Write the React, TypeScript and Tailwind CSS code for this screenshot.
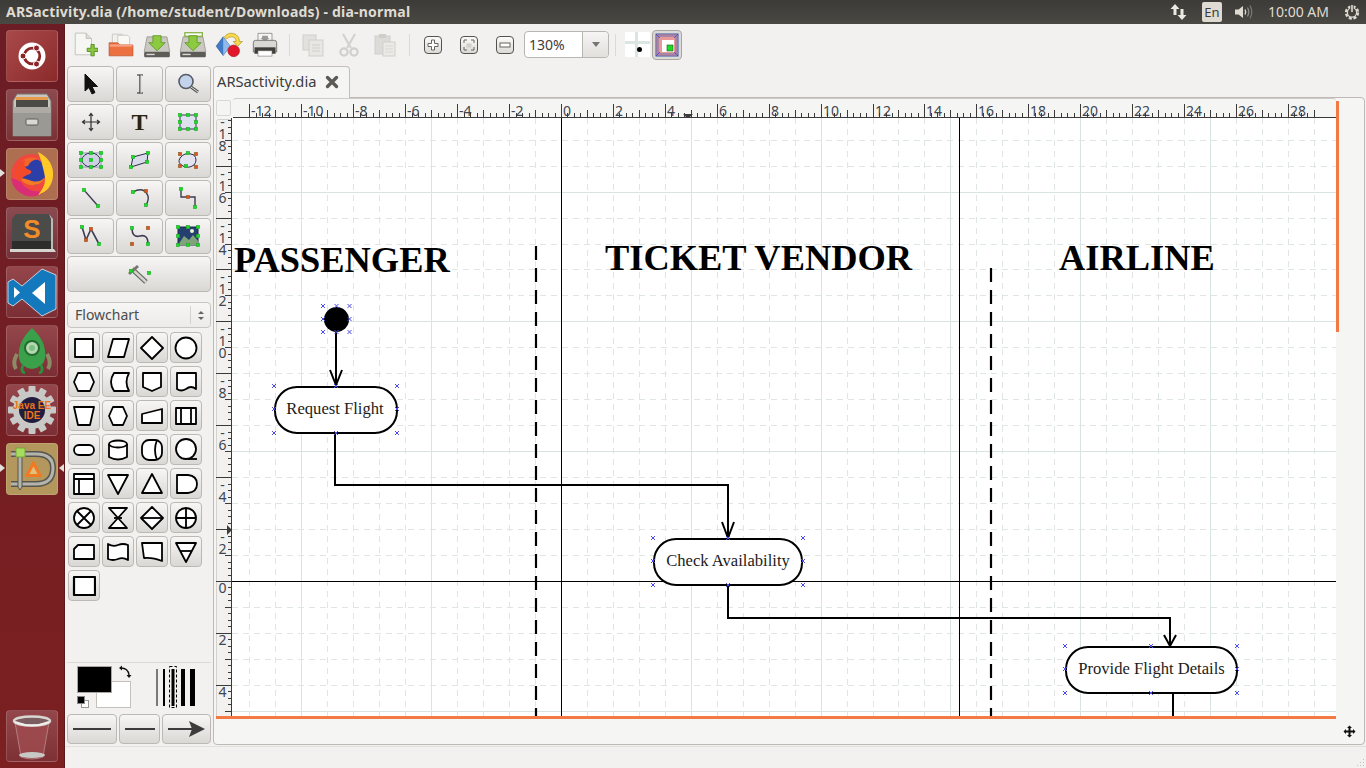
import React from "react";

const UNIT = 25.96;
const ORIGIN_X = 561;
const ORIGIN_Y = 581;

// small svg wrapper, 24 box
const Ic = ({ s = 24, children }: { s?: number; children: React.ReactNode }) => (
  <svg width={s} height={s} viewBox="0 0 24 24" className="block">
    {children}
  </svg>
);

// green/orange handle dots for the dia tool icons
const Dot = ({ x, y, o }: { x: number; y: number; o?: boolean }) => (
  <rect x={x - 1.8} y={y - 1.8} width="3.6" height="3.6" fill={o ? "#e8501c" : "#17e024"} stroke="#2f6a2f" strokeWidth="0.3" />
);

const Shadow = "#8f8fb8";

/* ---------- launcher icons ---------- */
const UbuntuLogo = () => (
  <svg width="52" height="52" viewBox="0 0 52 52">
    <circle cx="26" cy="26" r="13.5" fill="#fff" />
    <circle cx="26" cy="26" r="7.8" fill="none" stroke="#8a2426" strokeWidth="2.8" />
    <circle cx="17" cy="26" r="3" fill="#8a2426" stroke="#fff" />
    <circle cx="30.5" cy="18" r="3" fill="#8a2426" stroke="#fff" />
    <circle cx="30.5" cy="34" r="3" fill="#8a2426" stroke="#fff" />
  </svg>
);

const Cabinet = () => (
  <svg width="52" height="52" viewBox="0 0 52 52">
    <path d="M7 12 L11 5 H41 L45 12 V47 H7 Z" fill="#c9c6c0" stroke="#77736d" />
    <rect x="10" y="9" width="32" height="9" fill="#4c4a46" />
    <rect x="10" y="8" width="32" height="3" fill="#e79a4c" />
    <rect x="7" y="18" width="38" height="13" fill="#aeaba5" />
    <rect x="7" y="24" width="38" height="23" fill="#9b9993" />
    <rect x="20" y="30" width="12" height="6" rx="1" fill="#dad8d3" stroke="#5f5d58" />
  </svg>
);

const Firefox = () => (
  <svg width="52" height="52" viewBox="0 0 52 52">
    <circle cx="26" cy="27" r="21" fill="#f0483e" />
    <path d="M5 30 A21 21 0 0 0 40 43 Q22 46 14 33 Z" fill="#d92e76" />
    <circle cx="27" cy="24" r="13" fill="#2c3ea8" />
    <path d="M15 14 Q22 7 33 11 Q24 12 22 18 Q14 20 15 14 Z" fill="#f2662b" />
    <path d="M32 4 Q48 12 47 28 Q46 42 32 47 Q42 36 38 24 Q36 14 32 4 Z" fill="#ffc928" />
    <path d="M14 30 Q20 40 33 36 Q38 33 39 29 Q34 35 26 33 Q18 30 14 30 Z" fill="#f47a24" />
    <path d="M10 22 Q12 14 19 12 Q17 18 21 21 Q28 23 24 26 Q16 28 14 34 Q9 30 10 22 Z" fill="#f24a2b" />
  </svg>
);

const Sublime = () => (
  <svg width="52" height="52" viewBox="0 0 52 52">
    <path d="M10 7 H43 L46 12 V42 H6 V12 Z" fill="#4b4b49" />
    <path d="M6 34 H46 V42 H6 Z" fill="#2d2d2b" />
    <path d="M4 42 H48 L50 45 H4 Z" fill="#d6d5d0" />
    <path d="M43 7 L47 12 V42 L45 42 V12 Z" fill="#bdbbb5" />
    <text x="26" y="31" textAnchor="middle" fontSize="26" fontWeight="700" fontFamily='"Liberation Sans", sans-serif' fill="#f28c28">S</text>
  </svg>
);

const VSCode = () => (
  <svg width="52" height="52" viewBox="0 0 52 52">
    <path d="M36 3 L50 9 V43 L36 50 L16 33 L7 40 L2 37 V16 L7 13 L16 20 Z" fill="#1478bd" stroke="#e8eef2" strokeWidth="0.8" />
    <path d="M8 21 V32 L14 26.5 Z" fill="#fff" />
    <path d="M39 16 V38 L26 27 Z" fill="#fff" />
  </svg>
);

const Rocket = () => (
  <svg width="52" height="52" viewBox="0 0 52 52">
    <path d="M11 29 Q6 38 10 44 M41 29 Q46 38 42 44" fill="none" stroke="#8d8a66" strokeWidth="4" />
    <path d="M26 3 Q41 17 39 33 Q38 42 26 44 Q14 42 13 33 Q11 17 26 3 Z" fill="#3aa04a" />
    <circle cx="26" cy="23" r="7" fill="#b6d8b0" stroke="#226b30" strokeWidth="2" />
    <circle cx="26" cy="23" r="3" fill="#7fbf85" />
    <path d="M17 40 Q14 47 19 48 M35 40 Q38 47 33 48" fill="none" stroke="#2b8f3c" strokeWidth="3" />
  </svg>
);

const JavaEE = () => (
  <svg width="52" height="52" viewBox="0 0 52 52">
    <g fill="#c8c8c6">
      {Array.from({ length: 6 }).map((_, i) => (
        <rect key={i} x="22.5" y="2" width="7" height="48" rx="1" transform={`rotate(${i * 30} 26 26)`} />
      ))}
    </g>
    <circle cx="26" cy="26" r="19" fill="#c8c8c6" />
    <circle cx="26" cy="26" r="13" fill="#221c3e" />
    <text textAnchor="middle" fontSize="10" fontWeight="700" fontFamily='"Liberation Sans", sans-serif' fill="#e8751a">
      <tspan x="26" y="25">Java EE</tspan>
      <tspan x="26" y="35">IDE</tspan>
    </text>
  </svg>
);

const DiaIcon = () => (
  <svg width="52" height="52" viewBox="0 0 52 52">
    <path d="M5 11 H30 Q47 11 47 25 Q47 41 30 41 H5" fill="none" stroke="#55564f" strokeWidth="6" />
    <path d="M5 11 H30 Q47 11 47 25 Q47 41 30 41 H5" fill="none" stroke="#b4b4ac" strokeWidth="3" />
    <path d="M12 8 V44 L14 47 L16 44 V8 Z" fill="#b4b4ac" stroke="#55564f" />
    <rect x="10" y="5" width="9" height="9" fill="#a6dd5e" stroke="#7aa33c" />
    <path d="M21 32.5 L27.5 20 L34 32.5 Z" fill="#e2bf7c" stroke="#f07a22" strokeWidth="3" />
  </svg>
);

const Trash = () => (
  <svg width="52" height="52" viewBox="0 0 52 52">
    <path d="M9 12 L15 47 Q26 51 37 47 L43 12 Z" fill="#a14d52" fillOpacity="0.75" stroke="#c9a5a5" strokeWidth="0.6" />
    <ellipse cx="26" cy="11" rx="18" ry="4.5" fill="#7d5e60" stroke="#d9d7d2" strokeWidth="2.5" />
    <path d="M9 12 Q26 19 43 12" fill="none" stroke="#f0eeea" strokeWidth="2" />
    <ellipse cx="26" cy="45" rx="13" ry="3" fill="#c8c8c4" />
  </svg>
);

const Tile = ({ className, pip, right, children }: { className: string; pip?: boolean; right?: boolean; children: React.ReactNode }) => (
  <div className="relative flex h-[52px] w-[52px] items-center justify-center">
    <div className={`absolute inset-0 rounded-[4px] border border-white/15 ${className}`} />
    <div className="relative">{children}</div>
    {pip && <div className="absolute left-[-6px] top-[21px] h-0 w-0 border-y-[4px] border-l-[5px] border-y-transparent border-l-[#e3dfd9]" />}
    {right && <div className="absolute right-[-6px] top-[21px] h-0 w-0 border-y-[4px] border-r-[5px] border-y-transparent border-r-[#e3dfd9]" />}
  </div>
);

const Launcher = () => (
  <div className="flex w-[65px] shrink-0 flex-col items-start gap-[7px] border-r border-[#5a1a1c] bg-gradient-to-b from-[#6b1c24] to-[#7c2021] pl-[6px] pt-[6px]">
    <Tile className="bg-gradient-to-br from-[#a8494a] to-[#8c2a2b]"><UbuntuLogo /></Tile>
    <Tile className="bg-gradient-to-b from-[#8d4a4e] to-[#7a3236]"><Cabinet /></Tile>
    <Tile className="bg-[#ad6f50]" pip><Firefox /></Tile>
    <Tile className="bg-gradient-to-b from-[#8a4a50] to-[#73333a]"><Sublime /></Tile>
    <Tile className="bg-gradient-to-b from-[#94464b] to-[#7b2f35]"><VSCode /></Tile>
    <Tile className="bg-gradient-to-b from-[#94464b] to-[#7b2f35]"><Rocket /></Tile>
    <Tile className="bg-gradient-to-b from-[#94464b] to-[#7b2f35]"><JavaEE /></Tile>
    <Tile className="bg-[#b3975c]" pip right><DiaIcon /></Tile>
    <div className="mt-auto mb-[6px]">
      <Tile className="bg-gradient-to-b from-[#93474a] to-[#7d3135]"><Trash /></Tile>
    </div>
  </div>
);

/* ---------- top bar ---------- */
const TopBar = () => (
  <div className="flex h-6 shrink-0 items-center bg-gradient-to-b from-[#3c3b37] to-[#4a4843] pl-[6px] pr-[5px] font-['Noto_Sans',sans-serif] text-[#dfdbd2]">
    <span className="text-[14px] font-bold leading-none tracking-[0.2px]">ARSactivity.dia (/home/student/Downloads) - dia-normal</span>
    <div className="ml-auto flex items-center">
      <svg width="20" height="20" viewBox="0 0 20 20" className="mr-[13px]">
        <path d="M6 2 L1.5 7 H4.5 V13 H7.5 V7 H10.5 Z" fill="#ece9e2" />
        <path d="M13 18 L8.5 13 H11.5 V7 H14.5 V13 H17.5 Z" fill="#ece9e2" />
      </svg>
      <div className="mr-[12px] flex h-5 w-5 items-center justify-center rounded-[2px] bg-[#dfdbd2] text-[13px] leading-none text-[#3c3b37]">En</div>
      <svg width="20" height="18" viewBox="0 0 20 18" className="mr-[14px]">
        <path d="M1 6.5 H4.5 L9 3 V15 L4.5 11.5 H1 Z" fill="#dfdbd2" />
        <path d="M11 6.5 Q12.5 9 11 11.5" fill="none" stroke="#dfdbd2" strokeWidth="1.4" />
        <path d="M13.5 4.5 Q16 9 13.5 13.5" fill="none" stroke="#8c8a84" strokeWidth="1.3" />
        <path d="M16 2.5 Q19.5 9 16 15.5" fill="none" stroke="#77756f" strokeWidth="1.3" />
      </svg>
      <span className="mr-[14px] text-[14px] leading-none">10:00 AM</span>
      <svg width="18" height="18" viewBox="0 0 18 18">
        <circle cx="9" cy="9.5" r="6" fill="none" stroke="#dfdbd2" strokeWidth="2.4" strokeDasharray="3 1.7" />
        <circle cx="9" cy="9.5" r="4.6" fill="none" stroke="#dfdbd2" strokeWidth="1.2" />
        <path d="M9 2 V9" stroke="#46443f" strokeWidth="3.4" />
        <path d="M9 2 V9" stroke="#dfdbd2" strokeWidth="1.6" />
      </svg>
    </div>
  </div>
);

/* ---------- toolbar ---------- */
const NewIcon = () => (
  <Ic s={26}>
    <path d="M3 1 H13 L18 6 V21 H3 Z" fill="#f6f6f3" stroke="#b8b6b0" strokeWidth="0.7" />
    <path d="M13 1 V6 H18" fill="#dcdbd6" stroke="#b8b6b0" strokeWidth="0.7" />
    <path d="M14 15 H17.5 V11.5 H20.5 V15 H24 V18 H20.5 V22 H17.5 V18 H14 Z" fill="#8cc63f" stroke="#4c8a1c" strokeWidth="0.8" />
  </Ic>
);
const OpenIcon = () => (
  <Ic s={26}>
    <path d="M4 2 H13 L15 4 V12 H4 Z" fill="#f2f1ec" stroke="#b8b6b0" strokeWidth="0.6" />
    <path d="M9 3 H18 L20 5 V12 H9 Z" fill="#f9f8f5" stroke="#b8b6b0" strokeWidth="0.6" />
    <path d="M1 10 H9 L11 12 H23 V22 H1 Z" fill="#ed7040" stroke="#b8461d" strokeWidth="0.6" />
    <rect x="1.5" y="11.5" width="21" height="2" fill="#f7a384" />
  </Ic>
);
const DriveIcon = ({ label }: { label?: boolean }) => (
  <Ic s={28}>
    <path d="M3.5 5 H20.5 L23 18 H1 Z" fill="#c9c8c1" stroke="#8a8983" strokeWidth="0.6" />
    <rect x="1" y="18" width="22" height="4.5" rx="1" fill="#5d5c57" />
    <rect x="3" y="19.5" width="7" height="1.2" fill="#d9d8d2" />
    {label && <rect x="5" y="1.5" width="15" height="3" fill="#fff" stroke="#7bab34" strokeWidth="1" />}
    <path d="M8.5 4 H15.5 V10 H19 L12 17 L5 10 H8.5 Z" fill="#8ccb3f" stroke="#5d9420" strokeWidth="0.7" />
  </Ic>
);
const ExportIcon = () => (
  <Ic s={28}>
    <path d="M1 13 L7 5 L13 13 L7 21 Z" fill="#3f7bc6" stroke="#1c4e8f" strokeWidth="0.5" />
    <path d="M7 5 L13 13 L7 21 Z" fill="#8fb9e8" />
    <circle cx="16" cy="17" r="5" fill="#e2182a" stroke="#9c0f1b" strokeWidth="0.5" />
    <path d="M8 5 Q12 0 18 3 Q21 5 21 9 H23.5 L19.5 13 L15.5 9 H18 Q18 5 14 5 Q11 5 10 7 Z" fill="#f5d94e" stroke="#b6931c" strokeWidth="0.6" />
  </Ic>
);
const PrintIcon = () => (
  <Ic s={28}>
    <path d="M6 2 H18 V9 H6 Z" fill="#f6f6f4" stroke="#77766f" strokeWidth="0.6" />
    <path d="M9.5 4 H14.5 V6 H16 L12 9 L8 6 H9.5 Z" fill="#9a9995" />
    <path d="M2 10 Q2 8 4 8 H20 Q22 8 22 10 V18 H2 Z" fill="#d9d8d4" stroke="#66655f" strokeWidth="0.7" />
    <rect x="3" y="14" width="18" height="5.5" fill="#3f3e3a" />
    <rect x="6" y="17" width="12" height="4.5" fill="#fff" stroke="#77766f" strokeWidth="0.5" />
  </Ic>
);
const CopyIcon = () => (
  <Ic>
    <rect x="2" y="2" width="13" height="15" fill="#e2e1de" stroke="#d0cfcb" />
    <rect x="8" y="7" width="14" height="16" fill="#e8e7e4" stroke="#d0cfcb" />
    <path d="M11 12 H19 M11 15 H19 M11 18 H19" stroke="#d0cfcb" />
  </Ic>
);
const CutIcon = () => (
  <Ic>
    <path d="M6 1 L14 15 M18 1 L10 15" stroke="#d3d2ce" strokeWidth="2.2" />
    <circle cx="7" cy="19" r="3.6" fill="none" stroke="#d0cfcb" strokeWidth="2.2" />
    <circle cx="17" cy="19" r="3.6" fill="none" stroke="#d0cfcb" strokeWidth="2.2" />
  </Ic>
);
const PasteIcon = () => (
  <Ic>
    <rect x="2" y="3" width="15" height="18" fill="#dcdbd7" stroke="#d0cfcb" />
    <rect x="6" y="1" width="7" height="4" fill="#cfcec9" />
    <rect x="10" y="9" width="12" height="14" fill="#ebeae7" stroke="#d0cfcb" />
    <path d="M12 13 H20 M12 16 H20 M12 19 H20" stroke="#d8d7d3" />
  </Ic>
);

const SmallBtn = ({ children }: { children: React.ReactNode }) => (
  <div className="flex h-[18px] w-[18px] items-center justify-center rounded-[4px] border border-[#55534e] bg-gradient-to-b from-[#fbfbfa] to-[#dcdad6]">{children}</div>
);

const Sep = () => <div className="h-[22px] w-px bg-[#dcdad6]" />;

const Cell = ({ w = 36, children }: { w?: number; children: React.ReactNode }) => (
  <div className="flex items-center justify-center" style={{ width: w }}>{children}</div>
);

const Toolbar = () => (
  <div className="flex h-[38px] shrink-0 items-center pl-[2px] pt-[3px]">
    <Cell><NewIcon /></Cell>
    <Cell><OpenIcon /></Cell>
    <Cell><DriveIcon /></Cell>
    <Cell><DriveIcon label /></Cell>
    <Cell><ExportIcon /></Cell>
    <Cell><PrintIcon /></Cell>
    <Cell w={12}><Sep /></Cell>
    <Cell><CopyIcon /></Cell>
    <Cell><CutIcon /></Cell>
    <Cell><PasteIcon /></Cell>
    <Cell w={12}><Sep /></Cell>
    <Cell>
      <SmallBtn>
        <svg width="12" height="12" viewBox="0 0 12 12"><path d="M4.5 1 H7.5 V4.5 H11 V7.5 H7.5 V11 H4.5 V7.5 H1 V4.5 H4.5 Z" fill="#fff" stroke="#66645f" /></svg>
      </SmallBtn>
    </Cell>
    <Cell>
      <SmallBtn>
        <svg width="12" height="12" viewBox="0 0 12 12"><path d="M1 4 V1 H4 M8 1 H11 V4 M11 8 V11 H8 M4 11 H1 V8" fill="none" stroke="#66645f" /><rect x="3.5" y="4.5" width="5" height="4" fill="#d0cfcb" /></svg>
      </SmallBtn>
    </Cell>
    <Cell>
      <SmallBtn>
        <svg width="12" height="12" viewBox="0 0 12 12"><rect x="1" y="4" width="10" height="4" fill="#fff" stroke="#66645f" /></svg>
      </SmallBtn>
    </Cell>
    <div className="ml-[1px] flex h-[27px] w-[85px] items-center rounded-[4px] border border-[#b9b5b0] bg-white">
      <span className="w-[57px] pl-[4px] font-['Noto_Sans',sans-serif] text-[14px] leading-none text-[#3c3c3c]">130%</span>
      <div className="flex h-full flex-1 items-center justify-center rounded-r-[4px] border-l border-[#b9b5b0] bg-gradient-to-b from-[#f6f5f4] to-[#e2e0dd]">
        <div className="h-0 w-0 border-x-[4px] border-t-[5px] border-x-transparent border-t-[#77756f]" />
      </div>
    </div>
    <div className="ml-[6px] h-[22px] w-px bg-[#dcdad6]" />
    <div className="relative ml-[9px] h-[25px] w-[25px] bg-white">
      <div className="absolute left-[10px] top-0 h-full w-[3px] bg-[#dbe5e3]" />
      <div className="absolute left-0 top-[9px] h-[3px] w-full bg-[#dbe5e3]" />
      <div className="absolute left-[12px] top-[15px] h-[5px] w-[5px] rounded-full bg-black" />
    </div>
    <div className="ml-[2px] flex h-[30px] w-[30px] items-center justify-center rounded-[4px] border border-[#a9a6a1] bg-[#dbdad7]">
      <svg width="24" height="24" viewBox="0 0 24 24">
        <rect x="1" y="1" width="22" height="22" fill="#e89a9a" stroke="#3f58a8" strokeWidth="1" />
        <rect x="3" y="3" width="18" height="18" fill="none" stroke="#6e6ea8" />
        <rect x="7" y="7" width="12" height="12" fill="#fff" />
        <rect x="12" y="12" width="6" height="6" fill="#1fd92a" stroke="#1b5a1b" strokeWidth="0.6" />
        <path d="M1 1 L5 5 M23 1 L19 5 M1 23 L5 19 M23 23 L19 19" stroke="#3b3be0" strokeWidth="0.7" />
      </svg>
    </div>
  </div>
);

/* ---------- toolbox ---------- */
const ToolBtn = ({ className = "", children }: { className?: string; children: React.ReactNode }) => (
  <div className={`flex items-center justify-center rounded-[4px] border border-[#bcb9b4] bg-gradient-to-b from-[#f7f6f5] to-[#dad8d5] ${className}`}>{children}</div>
);

const tools: React.ReactNode[] = [
  <Ic key="a"><path d="M6 2 L6 19 L10 15.5 L13 22 L16 20.5 L13 14.5 L18.5 14.5 Z" fill="#111" stroke="#111" /></Ic>,
  <Ic key="b"><path d="M9 3 H15 M12 3 V21 M9 21 H15" stroke="#222" strokeWidth="1.2" /><path d="M13 3 V21" stroke="#ddd" /></Ic>,
  <Ic key="c"><circle cx="10" cy="9.5" r="7" fill="#c3d3ec" stroke="#555b66" strokeWidth="1.6" /><path d="M15 15 L22 20" stroke="#555" strokeWidth="3" /><path d="M15 15 L22 20" stroke="#ddd" strokeWidth="1" /></Ic>,
  <Ic key="d"><path d="M12 4 V20 M4 12 H20 M10 6 L12 3.5 L14 6 M10 18 L12 20.5 L14 18 M6 10 L3.5 12 L6 14 M18 10 L20.5 12 L18 14" fill="none" stroke="#2e2e2e" strokeWidth="1.2" /></Ic>,
  <span key="e" className="font-['Liberation_Serif',serif] text-[24px] font-bold leading-none text-[#2b2413]">T</span>,
  <Ic key="f"><rect x="4" y="5" width="16" height="14" fill="#dfe0ee" stroke="#34345c" /><Dot x={4} y={5} /><Dot x={12} y={5} /><Dot x={20} y={5} /><Dot x={4} y={12} /><Dot x={20} y={12} /><Dot x={4} y={19} /><Dot x={12} y={19} /><Dot x={20} y={19} /></Ic>,
  <Ic key="g"><rect x="2" y="5" width="20" height="14" fill="#e4e4ee" stroke={Shadow} /><ellipse cx="12" cy="12" rx="9" ry="7" fill="#cfd0e4" stroke="#2a2a4a" /><Dot x={2} y={5} /><Dot x={12} y={5} /><Dot x={22} y={5} /><Dot x={2} y={12} /><Dot x={12} y={12} /><Dot x={22} y={12} /><Dot x={2} y={19} /><Dot x={12} y={19} /><Dot x={22} y={19} /></Ic>,
  <Ic key="h"><path d="M5 9 L20 5 L19 14 L3 19 Z" fill="#d9dbe9" stroke="#2a2a4a" /><Dot x={5} y={9} /><Dot x={20} y={5} /><Dot x={19} y={14} /><Dot x={3} y={19} /></Ic>,
  <Ic key="i"><path d="M4 10 Q9 3 18 7 Q22 12 18 17 Q12 21 7 18 Q1 15 4 10 Z" fill="#e3e4ef" stroke="#2a2a4a" /><Dot x={4} y={6} o /><Dot x={20} y={6} o /><Dot x={4} y={18} o /><Dot x={20} y={19} o /><Dot x={12} y={5} /><Dot x={10} y={18} /></Ic>,
  <Ic key="j"><path d="M5 4 L19 20" stroke="#3c3c52" strokeWidth="1.4" /><Dot x={5} y={4} /><Dot x={19} y={20} /></Ic>,
  <Ic key="k"><path d="M5 6 Q16 0 20 10 Q21 14 18 19" fill="none" stroke="#3c3c52" strokeWidth="1.4" /><Dot x={5} y={6} /><Dot x={18} y={19} /><Dot x={18} y={5} o /></Ic>,
  <Ic key="l"><path d="M5 3 V11 H19 V21" fill="none" stroke="#3c3c52" strokeWidth="1.4" /><Dot x={5} y={3} /><Dot x={12} y={11} o /><Dot x={19} y={21} /></Ic>,
  <Ic key="m"><path d="M3 3 L7 16 L12 5 L20 20" fill="none" stroke="#3c3c52" strokeWidth="1.6" /><Dot x={3} y={3} /><Dot x={7} y={16} o /><Dot x={12} y={5} o /><Dot x={20} y={20} /></Ic>,
  <Ic key="n"><path d="M4 4 Q4 14 12 12 Q20 10 20 20" fill="none" stroke="#3c3c52" strokeWidth="1.6" /><Dot x={4} y={4} /><Dot x={20} y={4} o /><Dot x={4} y={20} o /><Dot x={20} y={20} /></Ic>,
  <Ic key="o"><rect x="2" y="3" width="20" height="18" fill="#24406e" stroke="#1f2a4a" /><path d="M2 21 L8 12 L13 16 L17 11 L22 17 V21 Z" fill="#7fa47a" /><circle cx="16" cy="7" r="2" fill="#eef2d5" /><Dot x={2} y={3} /><Dot x={12} y={3} /><Dot x={22} y={3} /><Dot x={2} y={12} /><Dot x={22} y={12} /><Dot x={2} y={21} /><Dot x={12} y={21} /><Dot x={22} y={21} /></Ic>,
];

const S = "#000";
const shape = (el: React.ReactNode, k: number) => (
  <ToolBtn key={k} className="h-[31px] w-[32px]">
    <svg width="24" height="24" viewBox="0 0 24 24" fill="#fff" stroke={S} strokeWidth="1.8" strokeLinejoin="round">{el}</svg>
  </ToolBtn>
);

const shapes: React.ReactNode[] = [
  <rect x="3" y="3" width="18" height="18" />,
  <path d="M7 3 H23 L18 21 H2 Z" />,
  <path d="M12 1 L23 12 L12 23 L1 12 Z" />,
  <circle cx="12" cy="12" r="10.5" />,
  <path d="M6 3 H18 L22 12 L18 21 H6 L2 12 Z" />,
  <path d="M8 3 H23 Q18 12 23 21 H8 Q2 12 8 3 Z" />,
  <path d="M3 3 H21 V17 L12 21 L3 17 Z" />,
  <path d="M3 3 H22 V19 Q17 15 12 19 Q7 22 3 19 Z" />,
  <path d="M2 3 H22 L18 21 H6 Z" />,
  <path d="M7 3 H17 L21 12 L17 21 H7 L3 12 Z" />,
  <path d="M2 10 L22 5 V19 H2 Z" />,
  <g><rect x="2" y="4" width="20" height="16" /><path d="M7 4 V20 M17 4 V20" /></g>,
  <rect x="2" y="7" width="20" height="10" rx="5" />,
  <g><path d="M3 6 V19 Q12 24 21 19 V6" /><ellipse cx="12" cy="6" rx="9" ry="3.5" /></g>,
  <g><rect x="2" y="2" width="20" height="20" rx="7" /><path d="M17 2 Q13 12 17 22" /></g>,
  <g><circle cx="12" cy="11" r="10" /><path d="M14 21 H23" /></g>,
  <g><rect x="2" y="2" width="20" height="20" /><path d="M2 7 H22 M7 7 V22" /></g>,
  <path d="M2 3 H22 L12 22 Z" />,
  <path d="M12 2 L22 21 H2 Z" />,
  <path d="M3 3 H14 Q23 4 23 12 Q23 20 14 21 H3 Z" />,
  <g><circle cx="12" cy="12" r="10" /><path d="M5 5 L19 19 M19 5 L5 19" /></g>,
  <g><path d="M3 2 H21 L3 22 H21 Z" /><path d="M8 12 H16" /></g>,
  <g><path d="M12 1 L23 12 L12 23 L1 12 Z" /><path d="M1 12 H23" /></g>,
  <g><circle cx="12" cy="12" r="10" /><path d="M12 2 V22 M2 12 H22" /></g>,
  <path d="M6 5 H22 V19 H2 V9 Z" />,
  <path d="M2 4 Q7 7 12 5 Q17 3 22 5 V20 Q17 17 12 19 Q7 21 2 19 Z" />,
  <path d="M2 3 H22 V21 Q12 17 4 18 Z" />,
  <g><path d="M2 3 H22 L12 22 Z" /><path d="M6 11 H18" /></g>,
  <rect x="2" y="3" width="21" height="18" strokeWidth="2.2" />,
];

const Toolbox = () => (
  <div className="flex w-[148px] shrink-0 flex-col pt-[4px] pl-[2px]">
    <div className="grid grid-cols-[47px_47px_46px] gap-x-[2px] gap-y-[2px] auto-rows-[36px] w-[144px]">
      {tools.map((t, i) => (
        <ToolBtn key={i}>{t}</ToolBtn>
      ))}
      <ToolBtn className="col-span-3">
        <Ic>
          <path d="M5 7 L19 20" stroke="#66665f" strokeWidth="5" />
          <path d="M5 7 L19 20" stroke="#d4d4d0" strokeWidth="2.5" />
          <path d="M2 12 L11 4" stroke="#77776f" strokeWidth="3" />
          <Dot x={4} y={9} />
          <Dot x={22} y={11} />
        </Ic>
      </ToolBtn>
    </div>
    <div className="mt-[10px] flex h-[26px] w-[144px] items-center rounded-[4px] border border-[#c8c5c0] bg-gradient-to-b from-[#f7f6f5] to-[#ecebe9] pl-[7px]">
      <span className="font-['Noto_Sans',sans-serif] text-[14px] leading-none text-[#4c4c4c]">Flowchart</span>
      <div className="ml-auto flex h-[18px] w-[20px] flex-col items-center justify-center gap-[3px] border-l border-[#d5d2ce]">
        <div className="h-0 w-0 border-x-[3px] border-b-[3px] border-x-transparent border-b-[#66645f]" />
        <div className="h-0 w-0 border-x-[3px] border-t-[3px] border-x-transparent border-t-[#66645f]" />
      </div>
    </div>
    <div className="ml-[1px] mt-[4px] grid grid-cols-[32px_32px_32px_32px] gap-x-[2px] gap-y-[3px]">
      {shapes.map((el, i) => shape(el, i))}
    </div>

    <div className="relative mr-[2px] mt-auto h-[52px] border-t border-[#dcdad6]">
      <div className="absolute left-[10px] top-[3px] z-10 h-[27px] w-[35px] border border-[#a9a6a1] bg-black" />
      <div className="absolute left-[29px] top-[18px] h-[27px] w-[35px] border border-[#c4c1bc] bg-white" />
      <div className="absolute left-[10px] top-[33px] z-10 h-[8px] w-[8px] border border-[#888] bg-black" />
      <div className="absolute left-[14px] top-[37px] h-[8px] w-[8px] border border-[#999] bg-white" />
      <svg width="14" height="14" viewBox="0 0 14 14" className="absolute left-[51px] top-[2px] z-10">
        <path d="M3 3 Q10 3 11 10" fill="none" stroke="#111" strokeWidth="1.4" />
        <path d="M1 3 L4 0.5 V5.5 Z M11 13 L8.5 10 H13.5 Z" fill="#111" />
      </svg>
      <svg width="44" height="42" viewBox="0 0 44 42" className="absolute left-[87px] top-[3px]">
        <path d="M3 3 V40" stroke="#000" strokeWidth="1" />
        <path d="M10 3 V40" stroke="#000" strokeWidth="2" />
        <path d="M19 3 V40" stroke="#000" strokeWidth="3" />
        <rect x="15.5" y="0.5" width="7" height="41" fill="none" stroke="#000" strokeDasharray="3 2" />
        <path d="M29 3 V40" stroke="#000" strokeWidth="4" />
        <path d="M38.5 3 V40" stroke="#000" strokeWidth="5" />
      </svg>
    </div>
    <div className="mb-[2px] flex h-[30px] w-[144px] gap-[2px]">
      <ToolBtn className="w-[50px]"><div className="h-[2px] w-[38px] bg-[#3c3c3c]" /></ToolBtn>
      <ToolBtn className="w-[41px]"><div className="h-[2px] w-[30px] bg-[#3c3c3c]" /></ToolBtn>
      <ToolBtn className="w-[49px]">
        <svg width="40" height="18" viewBox="0 0 40 18"><path d="M1 9 H30" stroke="#3c3c3c" strokeWidth="2" /><path d="M22 1 L38 9 L22 17 L25 9 Z" fill="#3c3c3c" /></svg>
      </ToolBtn>
    </div>
  </div>
);

/* ---------- rulers ---------- */
const RULER_FONT = '"Noto Sans", sans-serif';

const TopRuler = () => {
  const ticks: React.ReactNode[] = [];
  // ruler runs from x=233, drawn in page coords
  for (let i = -48; i <= 116; i++) {
    const x = ORIGIN_X + (i * UNIT) / 4;
    if (x < 233 || x > 1336) continue;
    const major = i % 8 === 0;
    const mid = !major && i % 4 === 0;
    const h = major ? 13 : mid ? 7 : 4;
    ticks.push(<path key={i} d={`M${Math.round(x) + 0.5} 116 V${116 - h}`} stroke="#3a3a3a" />);
    if (major) {
      ticks.push(
        <text key={"t" + i} x={Math.round(x) + 2} y="115" fontSize="14" fontFamily={RULER_FONT} fill="#40454f">
          {i / 4}
        </text>
      );
    }
  }
  return (
    <svg width="1103" height="20" viewBox="233 98 1103 20" className="block">
      <path d="M233 116.5 H1336" stroke="#3a3a3a" />
      {ticks}
      <path d="M683 113 H693 L688 118 Z" fill="#3c3c3c" />
    </svg>
  );
};

const LeftRuler = () => {
  const ticks: React.ReactNode[] = [];
  const labels: React.ReactNode[] = [];
  for (let i = -76; i <= 20; i++) {
    const y = ORIGIN_Y + (i * UNIT) / 4;
    if (y < 108 || y > 716) continue;
    const major = i % 8 === 0;
    const mid = !major && i % 4 === 0;
    const w = major ? 16 : mid ? 7 : 4;
    if (y >= 118) {
      ticks.push(<path key={i} d={`M232 ${Math.round(y) + 0.5} H${232 - w}`} stroke="#3a3a3a" />);
    }
    if (major) {
      const val = i / 4;
      // digits stacked under each other, one text per label
      const chars = String(val).split("").join("\n");
      labels.push(
        <div
          key={i}
          className="absolute left-0 w-[13px] whitespace-pre-line text-center font-['Noto_Sans',sans-serif] text-[14px] leading-[12px] text-[#40454f]"
          style={{ top: Math.round(y) - 118 + (val < 0 ? 2 : 1) }}
        >
          {chars}
        </div>
      );
    }
  }
  return (
    <div className="relative h-[598px] w-[16px]">
      <svg width="16" height="598" viewBox="216 118 16 598" className="block">
        <rect x="216.5" y="119.5" width="16" height="600" rx="2" fill="#f2f1f0" stroke="#d5d2ce" />
        <path d="M231.5 118 V716" stroke="#3a3a3a" />
        {ticks}
        <path d="M227 525 V535 L232 530 Z" fill="#3c3c3c" />
      </svg>
      {labels}
    </div>
  );
};

/* ---------- diagram ---------- */
const Handles = ({ xs, ys }: { xs: number[]; ys: number[] }) => (
  <g stroke="#4a4ae6" strokeWidth="1">
    {ys.map((y, r) =>
      xs.map((x, c) =>
        r === 1 && c === 1 ? null : (
          <path key={x + "-" + y} d={`M${x - 2} ${y - 2} L${x + 2} ${y + 2} M${x + 2} ${y - 2} L${x - 2} ${y + 2}`} />
        )
      )
    )}
  </g>
);

const Grid = () => {
  const lines: React.ReactNode[] = [];
  for (let i = -13; i <= 30; i++) {
    const x = Math.round(ORIGIN_X + i * UNIT) + 0.5;
    if (x < 232 || x > 1336) continue;
    const solid = i % 5 === 0;
    lines.push(<path key={"v" + i} d={`M${x} 118 V716`} stroke={solid ? "#d8e4e1" : "#dfe6e4"} strokeDasharray={solid ? undefined : "6 5"} />);
  }
  for (let i = -18; i <= 5; i++) {
    const y = Math.round(ORIGIN_Y + i * UNIT) + 0.5;
    if (y < 118 || y > 716) continue;
    const solid = i % 5 === 0;
    lines.push(<path key={"h" + i} d={`M232 ${y} H1336`} stroke={solid ? "#d8e4e1" : "#dfe6e4"} strokeDasharray={solid ? undefined : "6 5"} />);
  }
  return <g>{lines}</g>;
};

const Node = ({ className, children }: { className: string; children: string }) => (
  <div className={`absolute flex items-center justify-center rounded-[23px] border-2 border-black bg-white pb-[2px] font-['Liberation_Serif',serif] text-[16.6px] text-[#1c1c1c] ${className}`}>
    {children}
  </div>
);

const Title = ({ className, children }: { className: string; children: string }) => (
  <div className={`absolute whitespace-nowrap font-['Liberation_Serif',serif] text-[36.4px] font-bold leading-none text-black ${className}`}>
    {children}
  </div>
);

const Canvas = () => (
  <div className="relative h-[598px] w-[1104px] overflow-hidden bg-white">
    <svg width="1104" height="598" viewBox="232 118 1104 598" className="absolute left-0 top-0">
      <Grid />
      <path d="M232 581.5 H1336" stroke="#000" />
      <path d="M561.5 118 V716" stroke="#000" />
      <path d="M959.5 118 V716" stroke="#000" />
      <path d="M536 246 V716" stroke="#000" strokeWidth="2.2" strokeDasharray="14 8" />
      <path d="M991 268 V716" stroke="#000" strokeWidth="2.2" strokeDasharray="14 8" />
      <circle cx="336.5" cy="319.5" r="12.5" fill="#000" />
      <g fill="none" stroke="#000" strokeWidth="2">
        <path d="M336 332 V385" />
        <path d="M330 370 L336 385 L342 370" />
        <path d="M335 433 V485 H728 V538" />
        <path d="M722 522 L728 538 L734 522" />
        <path d="M728 585 V618 H1170 V646" />
        <path d="M1164 635 L1170 646 L1176 635" />
        <path d="M1173 693 V716" />
      </g>
    </svg>
    <Title className="left-[2px] top-[124px]">PASSENGER</Title>
    <Title className="left-[373px] top-[122px]">TICKET VENDOR</Title>
    <Title className="left-[827px] top-[122px]">AIRLINE</Title>
    <Node className="left-[42px] top-[268px] h-[48px] w-[124px] pr-[2px]">Request Flight</Node>
    <Node className="left-[421px] top-[420px] h-[48px] w-[150px]">Check Availability</Node>
    <Node className="left-[833px] top-[528px] h-[48px] w-[173px]">Provide Flight Details</Node>
    <svg width="1104" height="598" viewBox="232 118 1104 598" className="pointer-events-none absolute left-0 top-0">
      <Handles xs={[323, 336.5, 349.5]} ys={[306, 319, 332]} />
      <Handles xs={[274, 336, 397]} ys={[386, 409, 433]} />
      <Handles xs={[653, 728, 803]} ys={[538, 561, 585]} />
      <Handles xs={[1065, 1151, 1237]} ys={[646, 669, 693]} />
    </svg>
  </div>
);

const Notebook = () => (
  <div className="flex min-w-0 flex-1 flex-col pr-px">
    <div className="flex h-[35px] shrink-0 items-end">
      <div className="z-10 mb-[-1px] flex h-[32px] w-[137px] items-center rounded-t-[4px] border border-b-0 border-[#c4c1bc] bg-[#f5f5f4] pb-[2px] pl-[3px]">
        <span className="font-['Noto_Sans',sans-serif] text-[14.7px] leading-none text-[#3c3c3c]">ARSactivity.dia</span>
        <svg width="14" height="14" viewBox="0 0 14 14" className="ml-[9px]">
          <path d="M2.5 2.5 L11.5 11.5 M11.5 2.5 L2.5 11.5" stroke="#5c5a55" strokeWidth="3.4" strokeLinecap="round" />
        </svg>
      </div>
    </div>
    <div className="flex h-[648px] flex-col rounded-b-[4px] rounded-tr-[4px] border border-[#bdbab5] bg-[#f5f5f4]">
      <div className="flex">
        <div className="ml-[2px] w-[1120px]">
          <div className="flex h-[20px]">
            <div className="mt-[2px] h-[16px] w-[15px] rounded-[2px] border border-[#d9d7d3] bg-[#f5f5f4]" />
            <div className="ml-[2px] rounded-t-[3px] border-t border-[#cfccc8]">
              <TopRuler />
            </div>
          </div>
          <div className="flex">
            <LeftRuler />
            <Canvas />
          </div>
          <div className="h-[3px] bg-[#f47a45]" />
        </div>
        <div className="mt-[3px] h-[231px] w-[3px] bg-[#f47a45]" />
      </div>
      <div className="flex flex-1 items-center justify-end pr-[8px]">
        <svg width="13" height="13" viewBox="0 0 13 13">
          <path d="M6.5 0.5 L9 3 H7.5 V5.5 H10 V4 L12.5 6.5 L10 9 V7.5 H7.5 V10 H9 L6.5 12.5 L4 10 H5.5 V7.5 H3 V9 L0.5 6.5 L3 4 V5.5 H5.5 V3 H4 Z" fill="#111" />
        </svg>
      </div>
    </div>
  </div>
);

export default function App() {
  return (
    <div className="flex h-[768px] w-[1366px] flex-col overflow-hidden bg-[#f2f1f0]">
      <TopBar />
      <div className="flex min-h-0 flex-1">
        <Launcher />
        <div className="flex min-w-0 flex-1 flex-col">
          <Toolbar />
          <div className="flex h-[684px]">
            <Toolbox />
            <Notebook />
          </div>
          <div className="relative flex-1 border-t border-[#e2e0dd]">
            <svg width="12" height="10" viewBox="0 0 12 10" className="absolute bottom-0 right-0">
              <g fill="#c4c1bc">
                <rect x="9" y="1" width="1" height="1" />
                <rect x="6" y="4" width="1" height="1" />
                <rect x="9" y="4" width="1" height="1" />
                <rect x="3" y="7" width="1" height="1" />
                <rect x="6" y="7" width="1" height="1" />
                <rect x="9" y="7" width="1" height="1" />
              </g>
            </svg>
          </div>
        </div>
      </div>
    </div>
  );
}
